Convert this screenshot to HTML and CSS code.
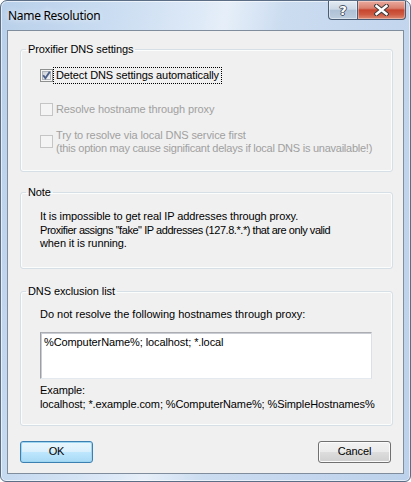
FILE: index.html
```html
<!DOCTYPE html>
<html>
<head>
<meta charset="utf-8">
<link rel="stylesheet" href="styles.css">
</head>
<body>
<div class="window">
  <div class="titlebar">
    <span class="title">Name Resolution</span>
    <div class="caption-buttons">
      <div class="cap-btn help"><span class="help-glyph">?</span></div>
      <div class="cap-btn close">
        <svg width="15" height="12" viewBox="0 0 15 12">
          <path d="M2.5 2 L12.5 10 M12.5 2 L2.5 10" stroke="#3a3a3a" stroke-width="4.4" stroke-linecap="square" fill="none"/>
          <path d="M2.5 2 L12.5 10 M12.5 2 L2.5 10" stroke="#ffffff" stroke-width="2.4" stroke-linecap="square" fill="none"/>
        </svg>
      </div>
    </div>
  </div>
  <div class="client">
    <fieldset class="group g1">
      <legend>Proxifier DNS settings</legend>
      <div class="body">
        <div class="check-row r1">
          <span class="cb">
            <svg width="13" height="13" viewBox="0 0 13 13">
              <defs>
                <linearGradient id="cbg" x1="0" y1="0" x2="1" y2="1">
                  <stop offset="0" stop-color="#cbcfd5"/>
                  <stop offset="1" stop-color="#f6f6f6"/>
                </linearGradient>
              </defs>
              <rect x="0.5" y="0.5" width="12" height="12" fill="#f4f4f4" stroke="#8e8f8f"/>
              <rect x="2.5" y="2.5" width="8" height="8" fill="url(#cbg)" stroke="#aeb3b9"/>
              <path d="M3.2 6.3 L5.4 9.2 L9.8 2.8" stroke="#4a5f8a" stroke-width="1.9" fill="none"/>
            </svg>
          </span>
          <span class="cb-label focus">Detect DNS settings automatically</span>
        </div>
        <div class="check-row r2 disabled">
          <span class="cb">
            <svg width="13" height="13" viewBox="0 0 13 13">
              <rect x="0.5" y="0.5" width="12" height="12" fill="#f4f4f4" stroke="#c5c5c5"/>
            </svg>
          </span>
          <span class="cb-label">Resolve hostname through proxy</span>
        </div>
        <div class="check-row r3 disabled">
          <span class="cb">
            <svg width="13" height="13" viewBox="0 0 13 13">
              <rect x="0.5" y="0.5" width="12" height="12" fill="#f4f4f4" stroke="#c5c5c5"/>
            </svg>
          </span>
          <span class="cb-label">Try to resolve via local DNS service first<br><span class="tight">(this option may cause significant delays if local DNS is unavailable!)</span></span>
        </div>
      </div>
    </fieldset>

    <fieldset class="group g2">
      <legend>Note</legend>
      <div class="body note">It is impossible to get real IP addresses through proxy.<br><span class="tighter">Proxifier assigns "fake" IP addresses (127.8.*.*) that are only valid</span><br>when it is running.</div>
    </fieldset>

    <fieldset class="group g3">
      <legend>DNS exclusion list</legend>
      <div class="body">
        <div class="intro">Do not resolve the following hostnames through proxy:</div>
        <div class="textbox">%ComputerName%; localhost; *.local</div>
        <div class="example">Example:<br>localhost; *.example.com; %ComputerName%; %SimpleHostnames%</div>
      </div>
    </fieldset>

    <div class="buttons">
      <div class="btn default">OK</div>
      <div class="btn">Cancel</div>
    </div>
  </div>
</div>
</body>
</html>
```

FILE: styles.css
```css
* { box-sizing: border-box; }

body {
  margin: 0;
  background: #ffffff;
  font-family: "Liberation Sans", Arial, sans-serif;
  font-size: 11px;
  letter-spacing: -0.1px;
  color: #000;
}

.window {
  width: 411px;
  height: 482px;
  border: 1px solid #5b6e85;
  border-radius: 7px 7px 6px 6px;
  background: linear-gradient(100deg, #b9d0ea 0%, #c9dcf1 22%, #dde9f7 40%, #e6eff9 46%, #cbdcf0 58%, #bcd1eb 100%);
  display: flex;
  flex-direction: column;
  padding: 0 6px 7px 6px;
  box-shadow: inset 0 0 0 1px rgba(255,255,255,0.6);
}

.titlebar {
  height: 29px;
  display: flex;
  align-items: flex-start;
  justify-content: space-between;
  margin-right: -2px;
}

.title {
  font-family: "Noto Sans", "Liberation Sans", sans-serif;
  font-size: 12px;
  letter-spacing: -0.3px;
  line-height: 29px;
  padding-left: 1px;
  color: #000;
  text-shadow: 0 0 6px rgba(255,255,255,0.9);
}

.caption-buttons {
  display: flex;
}

.cap-btn {
  height: 19px;
  border: 1px solid #4b5d74;
  border-top: none;
  display: flex;
  align-items: center;
  justify-content: center;
}

.help {
  width: 29px;
  border-right: none;
  border-radius: 0 0 0 4px;
  background: linear-gradient(#e3eaf2 0%, #ccd8e5 45%, #afc1d5 52%, #bccddf 100%);
  box-shadow: inset 0 0 0 1px rgba(255,255,255,0.45);
}

.help-glyph {
  font-family: "DejaVu Sans", sans-serif;
  font-weight: bold;
  font-size: 13px;
  line-height: 13px;
  color: #fff;
  text-shadow: 1px 0 0 #4a5566, -1px 0 0 #4a5566, 0 1px 0 #4a5566, 0 -1px 0 #4a5566;
}

.close {
  width: 49px;
  border-radius: 0 0 4px 0;
  background: linear-gradient(#e9ab9e 0%, #d9806f 40%, #c6452f 50%, #cf5a42 75%, #dd8a72 100%);
  box-shadow: inset 0 0 0 1px rgba(255,255,255,0.35);
}

.client {
  flex: 1;
  background: #f0f0f0;
  border: 1px solid #7f8d9c;
  padding: 12px 10px 0 12px;
  display: flex;
  flex-direction: column;
}

.group {
  margin: 0;
  padding: 0;
  border: 1px solid #d5dfe5;
  border-radius: 3px;
  box-shadow: inset 0 0 0 1px #fbfcfc;
  min-width: 0;
}

.group legend {
  padding: 0 2px;
  margin-left: 5px;
  line-height: 13px;
  height: 13px;
}

.body { padding-left: 19px; }

.g1 .body { padding-bottom: 16px; }
.g2 { margin-top: 14px; }
.g2 .body { padding-bottom: 17px; }
.g3 { margin-top: 16px; }
.g3 .body { padding-bottom: 14px; }

.check-row {
  display: flex;
  align-items: flex-start;
  line-height: 13px;
  white-space: nowrap;
}

.r1 { margin-top: 13px; }
.r2 { margin-top: 21px; }
.r3 { margin-top: 13px; }

.cb {
  width: 13px;
  height: 13px;
  flex: none;
  display: block;
}

.cb svg { display: block; }

.r3 .cb { margin-top: 6px; }

.cb-label { margin-left: 2px; padding-left: 1px; }

.focus {
  outline: 1px dotted #000;
  outline-offset: 1px;
  padding-right: 1px;
}

.disabled .cb-label { color: #a0a0a0; }

.tight { letter-spacing: -0.25px; }
.tighter { letter-spacing: -0.45px; }

.note {
  margin-top: 11px;
  line-height: 13.5px;
  white-space: nowrap;
}

.intro {
  margin-top: 10px;
  line-height: 13px;
  white-space: nowrap;
  letter-spacing: 0;
}

.textbox {
  margin-top: 11px;
  width: 332px;
  height: 47px;
  background: #fff;
  border: 1px solid #abadb3;
  border-left-color: #9c9fa6;
  border-right-color: #dbdfe6;
  border-bottom-color: #e3e9ef;
  box-shadow: inset 1px 1px 0 #c9ccd2;
  padding: 3px 3px;
  line-height: 13px;
  white-space: nowrap;
}

.example {
  margin-top: 4px;
  line-height: 14px;
  white-space: nowrap;
}

.buttons {
  margin-top: 15px;
  display: flex;
  justify-content: space-between;
  padding-right: 2px;
}

.btn {
  width: 73px;
  height: 22px;
  border: 1px solid #707070;
  border-radius: 3px;
  background: linear-gradient(#f2f2f2 0%, #ebebeb 48%, #dddddd 52%, #cfcfcf 100%);
  box-shadow: inset 0 0 0 1px #fbfbfb;
  display: flex;
  align-items: center;
  justify-content: center;
  line-height: 13px;
}

.btn.default {
  border-color: #3c7fb1;
  background: linear-gradient(#eaf6fd 0%, #d9f0fc 48%, #bee6fd 52%, #a7d9f5 100%);
  box-shadow: inset 0 0 0 1px #9ed6f2;
}
```
